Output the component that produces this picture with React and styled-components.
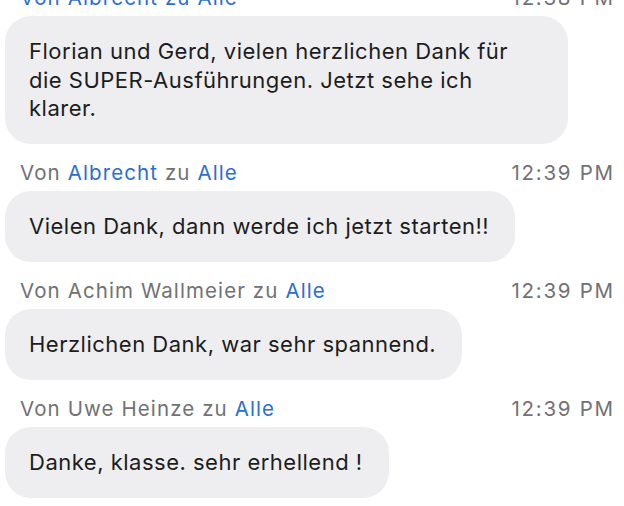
import React from "react";
import styled, { createGlobalStyle } from "styled-components";

const Global = createGlobalStyle`
  html, body { margin: 0; padding: 0; background: #ffffff; }
  body { font-family: Inter, "Liberation Sans", Arial, sans-serif; overflow: hidden; }
`;

const List = styled.div`
  display: flex;
  flex-direction: column;
  gap: 17.5px;
  margin-top: -14px;
  padding: 0 11px 0 5px;
`;

const Message = styled.div`
  display: flex;
  flex-direction: column;
  align-items: flex-start;
  gap: 6px;
`;

const Header = styled.div`
  align-self: stretch;
  display: flex;
  justify-content: space-between;
  align-items: center;
  height: 24px;
  padding-left: 15px;
  font-size: 20.5px;
  line-height: 24px;
  letter-spacing: 1.1px;
  color: ${(p) => (p.$active ? "#2a6fcf" : "#717176")};
`;

const Name = styled.span`
  color: ${(p) => (p.$link ? "#2a6fcf" : "inherit")};
`;

const Time = styled.span`
  color: #717176;
  letter-spacing: 1.7px;
  margin-right: -1.7px;
`;

const Bubble = styled.div`
  box-sizing: border-box;
  max-width: 563px;
  padding: 21px 26px 21px 24px;
  background: #eeeef1;
  border-radius: 26px;
  font-size: 22px;
  line-height: 28.5px;
  letter-spacing: 0.5px;
  color: #1d1d20;
`;

const messages = [
  {
    from: "Albrecht",
    fromLink: true,
    time: "12:38 PM",
    active: true,
    text: "Florian und Gerd, vielen herzlichen Dank für die SUPER-Ausführungen. Jetzt sehe ich klarer.",
  },
  {
    from: "Albrecht",
    fromLink: true,
    time: "12:39 PM",
    text: "Vielen Dank, dann werde ich jetzt starten!!",
  },
  {
    from: "Achim Wallmeier",
    fromLink: false,
    time: "12:39 PM",
    text: "Herzlichen Dank, war sehr spannend.",
  },
  {
    from: "Uwe Heinze",
    fromLink: false,
    time: "12:39 PM",
    text: "Danke, klasse. sehr erhellend !",
  },
];

export default function App() {
  return (
    <>
      <Global />
      <List>
        {messages.map((m, i) => (
          <Message key={i}>
            <Header $active={m.active}>
              <span>
                Von <Name $link={m.fromLink}>{m.from}</Name> zu{" "}
                <Name $link>Alle</Name>
              </span>
              <Time>{m.time}</Time>
            </Header>
            <Bubble>{m.text}</Bubble>
          </Message>
        ))}
      </List>
    </>
  );
}
